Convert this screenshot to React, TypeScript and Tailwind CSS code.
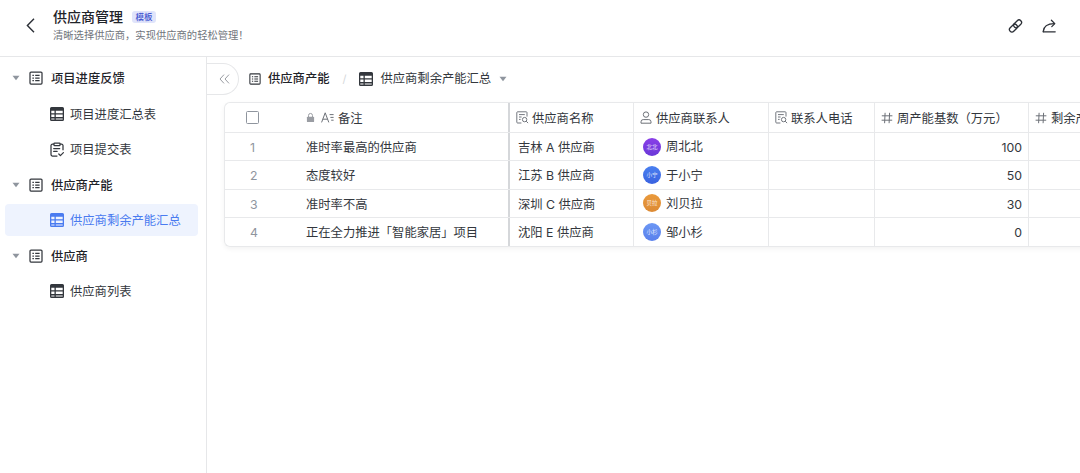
import React from "react";

const FONT = "font-['Inter','Noto_Sans_CJK_SC',sans-serif]";

function Caret({ className = "" }: { className?: string }) {
  return (
    <svg width="8" height="6" viewBox="0 0 8 6" className={className}>
      <path d="M0.5 0.8 H7.5 L4 5.2 Z" fill="currentColor" />
    </svg>
  );
}

function SheetIcon({ size = 14 }: { size?: number }) {
  return (
    <svg width={size} height={size} viewBox="0 0 14 14" fill="none" stroke="currentColor" strokeWidth="1.25">
      <rect x="1" y="1" width="12" height="12" rx="1" />
      <path d="M3.4 4.4h1.5M6.2 4.4h4.4M3.4 7h1.5M6.2 7h4.4M3.4 9.6h1.5M6.2 9.6h4.4" />
    </svg>
  );
}

function GridIcon({ className = "" }: { className?: string }) {
  return (
    <svg width="14" height="14" viewBox="0 0 14 13" preserveAspectRatio="none" className={className}>
      <path
        fillRule="evenodd"
        fill="currentColor"
        d="M1.5 0h11A1.5 1.5 0 0 1 14 1.5v10a1.5 1.5 0 0 1-1.5 1.5h-11A1.5 1.5 0 0 1 0 11.5v-10A1.5 1.5 0 0 1 1.5 0ZM1.3 3.4v2.3h3.2V3.4Zm4.5 0v2.3h6.9V3.4ZM1.3 7v2.3h3.2V7Zm4.5 0v2.3h6.9V7Zm-4.5 3.6v1.1h3.2v-1.1Zm4.5 0v1.1h6.9v-1.1Z"
      />
    </svg>
  );
}

function FormIcon() {
  return (
    <svg width="14" height="15" viewBox="0 0 14 15" fill="none" stroke="currentColor" strokeWidth="1.25" strokeLinejoin="round">
      <path d="M4 2.2H2.4A1.4 1.4 0 0 0 1 3.6v9A1.4 1.4 0 0 0 2.4 14h5M10 2.2h1.6A1.4 1.4 0 0 1 13 3.6v4.6" />
      <rect x="4" y="1" width="6" height="2.6" rx="0.6" />
      <path d="M3.7 6.6h6M3.7 9.4h3.4M8.8 12l1.6 1.6L13.4 10.6" strokeLinecap="round" />
    </svg>
  );
}

function LookupIcon() {
  return (
    <svg width="13" height="13" viewBox="0 0 13 13" fill="none" stroke="currentColor" strokeWidth="0.95" className="shrink-0 text-[#6d7178]">
      <path d="M5.4 12H1.6A.8.8 0 0 1 .8 11.2V1.6A.8.8 0 0 1 1.6.8h8.6a.8.8 0 0 1 .8.8v4" />
      <path d="M3 3.6h5.8M3 6h2.6M3 8.4h1.6" />
      <circle cx="8.6" cy="8.6" r="2.2" />
      <path d="M10.2 10.2l1.9 1.9" />
    </svg>
  );
}

function PersonIcon() {
  return (
    <svg width="12" height="13" viewBox="0 0 12 13" fill="none" stroke="currentColor" strokeWidth="1" className="mr-[1px] shrink-0 text-[#6d7178]">
      <circle cx="6" cy="3.6" r="2.7" />
      <path d="M1 12.2v-1.4A2.2 2.2 0 0 1 3.2 8.6h5.6A2.2 2.2 0 0 1 11 10.8v1.4Z" strokeLinejoin="round" />
    </svg>
  );
}

function HashIcon() {
  return (
    <svg width="12" height="12" viewBox="0 0 12 12" fill="none" stroke="currentColor" strokeWidth="1" className="mr-[1px] shrink-0 text-[#6d7178]">
      <path d="M4.1.8 3.6 11.2M8.6.8l-.5 10.4M.8 3.8h10.6M.6 8.2h10.6" />
    </svg>
  );
}

function LockIcon() {
  return (
    <svg width="9" height="11" viewBox="0 0 10 11" className="mr-[3px] shrink-0 text-[#9a9da3]">
      <path fill="none" stroke="currentColor" strokeWidth="1.1" d="M2.8 5V3.2a2.2 2.2 0 0 1 4.4 0V5" />
      <rect x="1" y="4.6" width="8" height="6" rx="1" fill="currentColor" />
    </svg>
  );
}

function TextFieldIcon() {
  return (
    <svg width="13" height="11" viewBox="0 0 13 11" fill="none" stroke="currentColor" strokeWidth="1" className="mr-[1px] shrink-0 text-[#6d7178]">
      <path d="M.6 10.4 4.2.8l3.6 9.6M1.8 7.2h4.8M8.6 2.6h4M9.4 5.4h3.2M10.2 8.2h2.4" />
    </svg>
  );
}

function NavGroup({ label }: { label: string }) {
  return (
    <div className="flex h-[35.5px] items-center pl-3 text-[#1f2329]">
      <Caret className="text-[#8f959e]" />
      <span className="ml-[9px] flex w-[14px] text-[#33373d]">
        <SheetIcon />
      </span>
      <span className="ml-[8px] pt-[2px] text-[12.3px] font-medium">{label}</span>
    </div>
  );
}

function NavItem({ label, icon, active }: { label: string; icon: React.ReactNode; active?: boolean }) {
  return (
    <div className="flex h-[35.5px] items-center">
      <div
        className={`ml-[5px] flex h-[32px] w-[193px] items-center rounded-[4px] pl-[45px] ${
          active ? "bg-[#eef3fe] text-[#4a7bf0]" : "text-[#33373d]"
        }`}
      >
        <span className="flex w-[14px] justify-center">{icon}</span>
        <span className="ml-[6px] pt-[2px] text-[12.3px]">{label}</span>
      </div>
    </div>
  );
}

const widths = ["w-[81px]", "w-[204px]", "w-[124px]", "w-[135px]", "w-[106px]", "w-[154px]", "w-[120px]"];

function HeaderCell({ i, icon, label, extra = "" }: { i: number; icon: React.ReactNode; label: string; extra?: string }) {
  return (
    <div className={`${widths[i]} ${extra} flex h-full shrink-0 items-center gap-[3px] border-r border-[#e8e9eb] pl-[6px] whitespace-nowrap`}>
      {icon}
      <span className="pt-[3px]">{label}</span>
    </div>
  );
}

function Avatar({ text, color }: { text: string; color: string }) {
  return (
    <span className={`flex h-[18px] w-[18px] shrink-0 items-center justify-center rounded-full text-[5.5px] text-white/80 ${color}`}>
      {text}
    </span>
  );
}

const rows = [
  { n: 1, note: "准时率最高的供应商", name: "吉林 A 供应商", short: "北北", person: "周北北", color: "bg-gradient-to-b from-[#8a3fe8] to-[#6a38d8]", cap: "100" },
  { n: 2, note: "态度较好", name: "江苏 B 供应商", short: "小宁", person: "于小宁", color: "bg-gradient-to-b from-[#4a80f0] to-[#3a62e0]", cap: "50" },
  { n: 3, note: "准时率不高", name: "深圳 C 供应商", short: "贝拉", person: "刘贝拉", color: "bg-gradient-to-b from-[#ea9a3c] to-[#dc8a34]", cap: "30" },
  { n: 4, note: "正在全力推进「智能家居」项目", name: "沈阳 E 供应商", short: "小杉", person: "邹小杉", color: "bg-gradient-to-b from-[#6c97f4] to-[#5a80ec]", cap: "0" },
];

export default function App() {
  return (
    <div className={`${FONT} flex h-[473px] w-[1080px] flex-col overflow-hidden bg-white text-[#1f2329]`}>
      <header className="flex h-[57px] shrink-0 items-center border-b border-[#e6e7e9] pb-[5px]">
        <svg width="9" height="15" viewBox="0 0 9 15" fill="none" stroke="#2b2f36" strokeWidth="1.4" className="ml-[26px]">
          <path d="M8 .8 1.4 7.5 8 14.2" />
        </svg>
        <div className="-mt-[2px] ml-[18px] flex flex-col">
          <div className="flex h-[20px] items-center">
            <span className="text-[14px] leading-none font-medium">供应商管理</span>
            <span className="ml-[9px] flex h-[12px] w-[24px] items-center justify-center rounded-[3px] bg-[#e0e4fb] text-[8.5px] leading-none font-medium text-[#4455d0]">
              模板
            </span>
          </div>
          <span className="mt-[1px] text-[10.3px] leading-[14px] text-[#6f747b]">
            {"清晰选择供应商\uFF0C实现供应商的轻松管理\uFF01"}
          </span>
        </div>
        <div className="ml-auto flex items-center gap-[19px] pr-[23px] text-[#2b2f36]">
          <svg width="15" height="16" viewBox="0 0 15 16" fill="none" stroke="currentColor" strokeWidth="1.3">
            <g transform="rotate(-45 7.5 8)">
              <rect x="0" y="5.5" width="9" height="5" rx="2.5" />
              <rect x="6" y="5.5" width="9" height="5" rx="2.5" />
            </g>
          </svg>
          <svg width="15" height="14" viewBox="0 0 15 14" fill="none" stroke="currentColor" strokeWidth="1.25" strokeLinecap="round" strokeLinejoin="round">
            <path d="M1.2 12.6C1.6 7.6 4.8 4.6 12.4 4.6" />
            <path d="M9.4 1.2l3.4 3.4-3 3" />
            <path d="M1.2 12.8h12" />
          </svg>
        </div>
      </header>

      <div className="flex min-h-0 flex-1">
        <aside className="w-[207px] shrink-0 border-r border-[#e6e7e9] pt-[3.5px]">
          <NavGroup label="项目进度反馈" />
          <NavItem label="项目进度汇总表" icon={<GridIcon />} />
          <NavItem label="项目提交表" icon={<FormIcon />} />
          <NavGroup label="供应商产能" />
          <NavItem label="供应商剩余产能汇总" icon={<GridIcon />} active />
          <NavGroup label="供应商" />
          <NavItem label="供应商列表" icon={<GridIcon />} />
        </aside>

        <main className="flex min-w-0 flex-1 flex-col overflow-hidden">
          <div className="flex h-[45px] shrink-0 items-start pt-[6px]">
            <div className="flex h-[32px] w-[32px] items-center justify-center rounded-r-full border border-l-0 border-[#e6e7e9] pl-[3px] text-[#9a9da3]">
              <svg width="11" height="10" viewBox="0 0 11 10" fill="none" stroke="currentColor" strokeWidth="1">
                <path d="M5 .6 1 5l4 4.4M10 .6 6 5l4 4.4" />
              </svg>
            </div>
            <div className="flex h-[32px] items-center text-[12.3px]">
              <span className="ml-[10px] flex text-[#33373d]">
                <SheetIcon size={12} />
              </span>
              <span className="ml-[7px] font-medium">供应商产能</span>
              <span className="ml-[13px] text-[11px] text-[#d5d7da]">/</span>
              <GridIcon className="ml-[13px] text-[#33373d]" />
              <span className="ml-[7px] text-[#33373d]">供应商剩余产能汇总</span>
              <Caret className="ml-[8px] text-[#8f959e]" />
            </div>
          </div>

          <div className="ml-[17px] w-[880px] overflow-hidden rounded-l-[6px] border-y border-l border-[#e8e9eb] text-[12.3px] text-[#33373d] shadow-[0_2px_5px_rgba(0,0,0,0.05)]">
            <div className="flex h-[30px] items-center border-b border-[#e8e9eb]">
              <div className={`${widths[0]} flex h-full shrink-0 items-center pl-[21px]`}>
                <span className="h-[13px] w-[13px] rounded-[1.5px] border border-[#8f959e]" />
              </div>
              <div className={`${widths[1]} flex h-full shrink-0 items-center gap-[3px] border-r-2 border-[#d5d7da]`}>
                <LockIcon />
                <TextFieldIcon />
                <span className="pt-[3px]">备注</span>
              </div>
              <HeaderCell i={2} icon={<LookupIcon />} label="供应商名称" />
              <HeaderCell i={3} icon={<PersonIcon />} label="供应商联系人" />
              <HeaderCell i={4} icon={<LookupIcon />} label="联系人电话" />
              <HeaderCell i={5} icon={<HashIcon />} label={"周产能基数\uFF08万元\uFF09"} />
              <HeaderCell i={6} icon={<HashIcon />} label="剩余产能汇总" extra="border-r-0" />
            </div>
            {rows.map((r, idx) => (
              <div key={r.n} className={`flex h-[28.3px] items-center ${idx < 3 ? "border-b border-[#e8e9eb]" : ""}`}>
                <div className={`${widths[0]} h-full shrink-0 pl-[25px] leading-[29px] text-[#8f959e]`}>{r.n}</div>
                <div className={`${widths[1]} h-full shrink-0 border-r-2 border-[#d5d7da] leading-[29px] whitespace-nowrap`}>{r.note}</div>
                <div className={`${widths[2]} h-full shrink-0 border-r border-[#e8e9eb] pl-[8px] leading-[29px] whitespace-nowrap`}>{r.name}</div>
                <div className={`${widths[3]} flex h-full shrink-0 items-center gap-[5px] border-r border-[#e8e9eb] pl-[9px]`}>
                  <Avatar text={r.short} color={r.color} />
                  <span className="pt-[2px]">{r.person}</span>
                </div>
                <div className={`${widths[4]} h-full shrink-0 border-r border-[#e8e9eb]`} />
                <div className={`${widths[5]} h-full shrink-0 border-r border-[#e8e9eb] pr-[6px] text-right leading-[29px]`}>{r.cap}</div>
                <div className={`${widths[6]} h-full shrink-0`} />
              </div>
            ))}
          </div>
        </main>
      </div>
    </div>
  );
}
